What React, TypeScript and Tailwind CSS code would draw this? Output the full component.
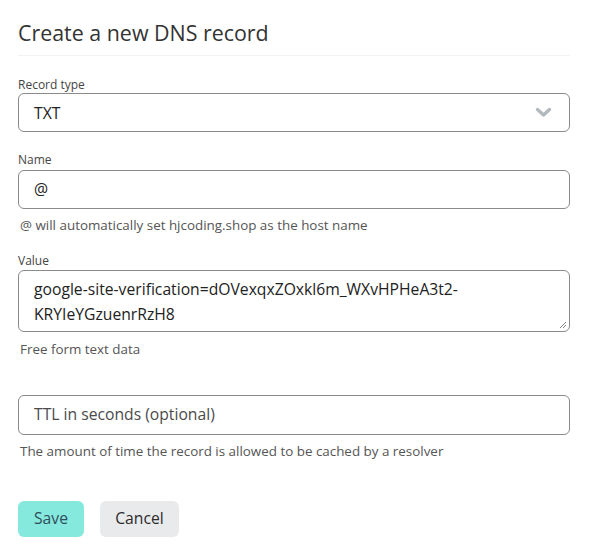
import React from "react";

export default function App() {
  const font = { fontFamily: '"Open Sans", "Noto Sans", sans-serif' };
  return (
    <div className="w-[591px] h-[555px] bg-white text-[#333]" style={font}>
      <div className="ml-[18px] pt-[17px] w-[552px]">
        <h1 className="text-[21.4px] leading-[32px] text-[#333] font-normal">Create a new DNS record</h1>
        <div className="mt-[6px] h-px bg-[#f2f3f4]" />

        <label className="block mt-[21px] text-[12px] leading-[16px] text-[#444]">Record type</label>
        <div className="h-[39px] border border-[#8a8a8a] rounded-[6px] flex items-center justify-between pl-[15px] pr-[17px]">
          <span className="text-[15.7px] text-[#222] translate-y-[1px]">TXT</span>
          <svg width="17" height="11" viewBox="0 0 17 11">
            <path d="M2.5 2.5 L8.5 8 L14.5 2.5" fill="none" stroke="#b3babe" strokeWidth="3.4" strokeLinecap="round" strokeLinejoin="round" />
          </svg>
        </div>

        <label className="block mt-[20px] text-[12px] leading-[16px] text-[#444]">Name</label>
        <div className="mt-[2px] h-[39px] border border-[#8a8a8a] rounded-[6px] flex items-center pl-[15px]">
          <span className="text-[15.7px] text-[#222]">@</span>
        </div>
        <p className="mt-[8px] ml-[2px] text-[13.4px] leading-[16px] text-[#555]">@ will automatically set hjcoding.shop as the host name</p>

        <label className="block mt-[20px] text-[12px] leading-[16px] text-[#444]">Value</label>
        <div className="relative mt-[1px] h-[62px] border border-[#8a8a8a] rounded-[6px] pl-[15px] pt-[6px]">
          <p className="text-[15.7px] leading-[24.5px] text-[#222]">
            google-site-verification=dOVexqxZOxkl6m_WXvHPHeA3t2-
            <br />
            KRYIeYGzuenrRzH8
          </p>
          <svg className="absolute right-[2px] bottom-[2px]" width="9" height="9" viewBox="0 0 9 9">
            <path d="M8 2 L2 8 M8 5 L5 8" stroke="#888" strokeWidth="1" />
          </svg>
        </div>
        <p className="mt-[9px] ml-[2px] text-[13.4px] leading-[16px] text-[#555]">Free form text data</p>

        <div className="mt-[38px] h-[40px] border border-[#8a8a8a] rounded-[6px] flex items-center pl-[15px]">
          <span className="text-[15.7px] text-[#4a4a4a]">TTL in seconds (optional)</span>
        </div>
        <p className="mt-[8px] ml-[2px] text-[13.4px] leading-[16px] text-[#555]">The amount of time the record is allowed to be cached by a resolver</p>

        <div className="mt-[42px] flex gap-[16px]">
          <button className="h-[36px] w-[66px] rounded-[6px] bg-[#86e9de] text-[15.7px] text-[#2f4f5c]">Save</button>
          <button className="h-[36px] w-[79px] rounded-[6px] bg-[#e9eaec] text-[15.7px] text-[#2b2b2b]">Cancel</button>
        </div>
      </div>
    </div>
  );
}
